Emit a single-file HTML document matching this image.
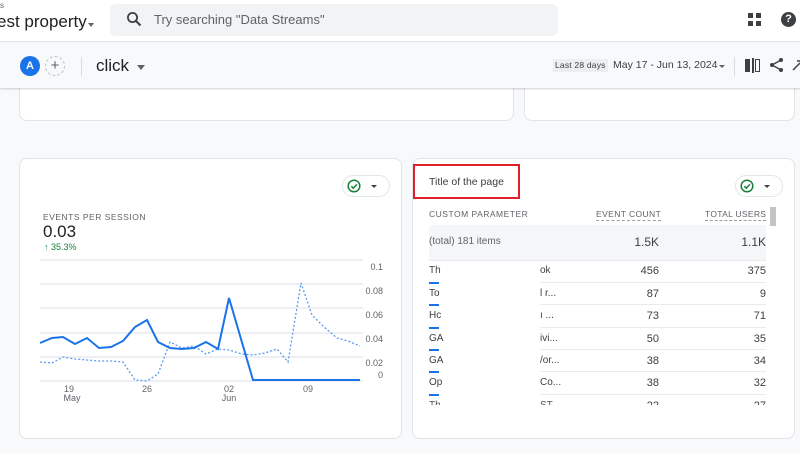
<!DOCTYPE html>
<html><head><meta charset="utf-8"><style>
*{margin:0;padding:0;box-sizing:border-box}
body{width:800px;height:453px;overflow:hidden;background:#f8f9fa;font-family:"Liberation Sans",Arial,sans-serif;color:#202124;position:relative}
.abs{position:absolute}
.card{position:absolute;background:#fff;border:1px solid #e0e3e7;border-radius:8px}
.t{position:absolute;white-space:nowrap}
.pill{position:absolute;width:48px;height:22px;border:1px solid #e3e5e8;border-radius:12px;background:#fff}
.num{position:absolute;font-size:11px;color:#3c4043;text-align:right;white-space:nowrap}
.row{position:absolute;left:429px;width:337px;height:1px;background:#e8eaed}
.blue{position:absolute;left:429px;width:10px;height:2px;background:#1a73e8}
.c{font-size:10px;color:#3c4043}
</style></head><body>
<div class="abs" style="left:0;top:0;width:800px;height:42px;background:#fff;border-bottom:1px solid #e6e8eb"></div>
<div class="t" style="left:0;top:1px;font-size:8px;color:#5f6368">s</div>
<div class="t" style="left:-3px;top:12px;font-size:17px;color:#202124">est property</div>
<div class="abs" style="left:88px;top:23px;border-left:3.5px solid transparent;border-right:3.5px solid transparent;border-top:4px solid #5f6368"></div>
<div class="abs" style="left:110px;top:4px;width:448px;height:32px;background:#f1f3f4;border-radius:6px"></div>
<svg class="abs" style="left:126px;top:11px" width="16" height="16" viewBox="0 0 16 16"><circle cx="6.5" cy="6.5" r="4.6" fill="none" stroke="#3c4043" stroke-width="1.8"/><path d="M10 10l4.5 4.5" stroke="#3c4043" stroke-width="2"/></svg>
<div class="t" style="left:154px;top:12px;font-size:13px;color:#5f6368">Try searching "Data Streams"</div>
<div class="abs" style="left:748px;top:13px;width:5px;height:5px;background:#3c4043"></div>
<div class="abs" style="left:756px;top:13px;width:5px;height:5px;background:#3c4043"></div>
<div class="abs" style="left:748px;top:21px;width:5px;height:5px;background:#3c4043"></div>
<div class="abs" style="left:756px;top:21px;width:5px;height:5px;background:#3c4043"></div>
<div class="abs" style="left:781px;top:12px;width:15px;height:15px;border-radius:50%;background:#3c4043;color:#fff;font-size:11px;font-weight:bold;text-align:center;line-height:15px">?</div>

<div class="card" style="left:19px;top:80px;width:495px;height:41px;border-top:none;border-radius:0 0 8px 8px"></div>
<div class="card" style="left:524px;top:80px;width:271px;height:41px;border-top:none;border-radius:0 0 8px 8px"></div>
<div class="abs" style="left:0;top:43px;width:800px;height:45px;background:#f8f9fa;box-shadow:0 1px 2px rgba(0,0,0,.18)"></div>
<div class="abs" style="left:20px;top:56px;width:20px;height:20px;border-radius:50%;background:#1a73e8;color:#fff;font-size:11px;font-weight:bold;text-align:center;line-height:20px">A</div>
<div class="abs" style="left:45px;top:56px;width:20px;height:20px;border-radius:50%;border:1px dashed #bdc1c6;color:#5f6368;font-size:15px;text-align:center;line-height:18px">+</div>
<div class="abs" style="left:81px;top:57px;width:1px;height:19px;background:#dadce0"></div>
<div class="t" style="left:96px;top:56px;font-size:17px;color:#202124">click</div>
<div class="abs" style="left:137px;top:65px;border-left:4.5px solid transparent;border-right:4.5px solid transparent;border-top:5px solid #5f6368"></div>
<div class="abs" style="left:553px;top:59px;width:55px;height:13px;background:#eceef0"></div>
<div class="t" style="left:555px;top:60px;font-size:8.5px;color:#3c4043;letter-spacing:.2px">Last 28 days</div>
<div class="t" style="left:613px;top:59px;font-size:10.5px;color:#3c4043">May 17 - Jun 13, 2024</div>
<div class="abs" style="left:719px;top:65px;border-left:3px solid transparent;border-right:3px solid transparent;border-top:3.5px solid #5f6368"></div>
<div class="abs" style="left:734px;top:57px;width:1px;height:19px;background:#dadce0"></div>
<div class="abs" style="left:745px;top:59px;width:5px;height:13px;background:#3c4043"></div>
<div class="abs" style="left:752px;top:58px;width:1.5px;height:15px;background:#3c4043"></div>
<div class="abs" style="left:755px;top:59px;width:5px;height:13px;border:1.5px solid #3c4043"></div>
<svg class="abs" style="left:769px;top:57px" width="16" height="16" viewBox="0 0 16 16"><circle cx="12" cy="3" r="2" fill="#3c4043"/><circle cx="3" cy="8" r="2" fill="#3c4043"/><circle cx="12" cy="13" r="2" fill="#3c4043"/><path d="M12 3L3 8l9 5" stroke="#3c4043" stroke-width="1.4" fill="none"/></svg>
<svg class="abs" style="left:792px;top:58px" width="10" height="14"><path d="M1 12L8 5M5 3h4v4" stroke="#3c4043" stroke-width="1.5" fill="none"/></svg>

<div class="card" style="left:19px;top:158px;width:383px;height:281px"></div>
<div class="pill" style="left:342px;top:175px"></div>
<svg class="abs" style="left:347px;top:179px" width="14" height="14"><circle cx="7" cy="7" r="5.8" fill="none" stroke="#188038" stroke-width="1.5"/><path d="M4.3 7.2l2 2 3.6-3.8" stroke="#188038" stroke-width="1.5" fill="none"/></svg>
<div class="abs" style="left:371px;top:185px;border-left:3px solid transparent;border-right:3px solid transparent;border-top:3.5px solid #3c4043"></div>
<div class="t" style="left:43px;top:212px;font-size:8.5px;color:#5f6368;letter-spacing:.5px">EVENTS PER SESSION</div>
<div class="t" style="left:43px;top:222px;font-size:17px;color:#202124">0.03</div>
<div class="t" style="left:44px;top:242px;font-size:9px;color:#188038">↑ 35.3%</div>
<svg class="abs" style="left:0;top:0" width="800" height="453">
<g stroke="#e8eaed" stroke-width="1.5"><line x1="40" y1="260" x2="363" y2="260"/><line x1="40" y1="284" x2="363" y2="284"/><line x1="40" y1="308" x2="363" y2="308"/><line x1="40" y1="333" x2="363" y2="333"/><line x1="40" y1="357" x2="363" y2="357"/><line x1="40" y1="381" x2="363" y2="381"/></g>
<polyline fill="none" stroke="#5b9af0" stroke-width="1.3" stroke-dasharray="2,2" points="40,362 52,363 63,357 75,359 87,360 99,361 111,361 123,362 135,380 147,381 158,374 170,342 182,348 194,346 206,354 218,349 229,350 242,354 253,355 265,353 277,349 288,362 301,283 312,315 324,327 337,338 348,341 360,346"/>
<polyline fill="none" stroke="#1a73e8" stroke-width="2" points="40,343 52,338 63,337 75,344 87,338 99,348 111,347 123,341 135,327 147,320 158,342 170,348 182,349 194,348 206,342 218,349 229,298 253,380 360,380"/>
<g font-size="9" fill="#5f6368" font-family="Liberation Sans, sans-serif" text-anchor="end"><text x="383" y="270">0.1</text><text x="383" y="294">0.08</text><text x="383" y="318">0.06</text><text x="383" y="342">0.04</text><text x="383" y="366">0.02</text><text x="383" y="378">0</text></g>
<g font-size="9" fill="#5f6368" font-family="Liberation Sans, sans-serif" text-anchor="middle"><text x="69" y="392">19</text><text x="72" y="401">May</text><text x="147" y="392">26</text><text x="229" y="392">02</text><text x="229" y="401">Jun</text><text x="308" y="392">09</text></g>
</svg>

<div class="card" style="left:412px;top:158px;width:383px;height:281px"></div>
<div class="abs" style="left:413px;top:164px;width:107px;height:35px;border:2.5px solid #e0202a"></div>
<div class="t" style="left:429px;top:176px;font-size:10.5px;color:#3c4043">Title of the page</div>
<div class="pill" style="left:735px;top:175px"></div>
<svg class="abs" style="left:740px;top:179px" width="14" height="14"><circle cx="7" cy="7" r="5.8" fill="none" stroke="#188038" stroke-width="1.5"/><path d="M4.3 7.2l2 2 3.6-3.8" stroke="#188038" stroke-width="1.5" fill="none"/></svg>
<div class="abs" style="left:764px;top:185px;border-left:3px solid transparent;border-right:3px solid transparent;border-top:3.5px solid #3c4043"></div>
<div class="t" style="left:429px;top:209px;font-size:8.5px;color:#5f6368;letter-spacing:.5px">CUSTOM PARAMETER</div>
<div class="t" style="left:596px;top:209px;font-size:8.5px;color:#5f6368;letter-spacing:.4px;border-bottom:1px dashed #9aa0a6;padding-bottom:1px">EVENT COUNT</div>
<div class="t" style="left:705px;top:209px;font-size:8.5px;color:#5f6368;letter-spacing:.3px;border-bottom:1px dashed #9aa0a6;padding-bottom:1px">TOTAL USERS</div>
<div class="abs" style="left:770px;top:207px;width:6px;height:19px;background:#c4c4c4"></div>
<div class="abs" style="left:429px;top:225px;width:337px;height:35px;background:#f5f6f7"></div>
<div class="t" style="left:429px;top:236px;font-size:10px;color:#5f6368">(total) 181 items</div>
<div class="num" style="right:141px;top:235px;font-size:12px">1.5K</div>
<div class="num" style="right:34px;top:235px;font-size:12px">1.1K</div>
<div class="row" style="top:260px"></div>
<div class="t c" style="left:429px;top:265px">Th</div><div class="t c" style="left:540px;top:265px">ok</div><div class="num" style="right:141px;top:265px">456</div><div class="num" style="right:34px;top:265px">375</div>
<div class="row" style="top:282px;left:540px;width:226px"></div><div class="blue" style="top:282px"></div>
<div class="t c" style="left:429px;top:288px">To</div><div class="t c" style="left:540px;top:288px">l r...</div><div class="num" style="right:141px;top:288px">87</div><div class="num" style="right:34px;top:288px">9</div>
<div class="row" style="top:304px;left:540px;width:226px"></div><div class="blue" style="top:304px"></div>
<div class="t c" style="left:429px;top:310px">Hc</div><div class="t c" style="left:540px;top:310px">ı ...</div><div class="num" style="right:141px;top:310px">73</div><div class="num" style="right:34px;top:310px">71</div>
<div class="row" style="top:327px;left:540px;width:226px"></div><div class="blue" style="top:327px"></div>
<div class="t c" style="left:429px;top:333px">GA</div><div class="t c" style="left:540px;top:333px">ivi...</div><div class="num" style="right:141px;top:333px">50</div><div class="num" style="right:34px;top:333px">35</div>
<div class="row" style="top:349px;left:540px;width:226px"></div><div class="blue" style="top:349px"></div>
<div class="t c" style="left:429px;top:355px">GA</div><div class="t c" style="left:540px;top:355px">/or...</div><div class="num" style="right:141px;top:355px">38</div><div class="num" style="right:34px;top:355px">34</div>
<div class="row" style="top:371px;left:540px;width:226px"></div><div class="blue" style="top:371px"></div>
<div class="t c" style="left:429px;top:377px">Op</div><div class="t c" style="left:540px;top:377px">Co...</div><div class="num" style="right:141px;top:377px">38</div><div class="num" style="right:34px;top:377px">32</div>
<div class="row" style="top:394px;left:540px;width:226px"></div><div class="blue" style="top:394px"></div>
<div class="abs" style="left:420px;top:400px;width:360px;height:5px;overflow:hidden"><div class="t" style="left:9px;top:0;font-size:10px;color:#555">Th</div><div class="t" style="left:120px;top:0;font-size:10px;color:#555">ST</div><div class="num" style="right:121px;top:0">22</div><div class="num" style="right:14px;top:0">27</div></div>
</body></html>
